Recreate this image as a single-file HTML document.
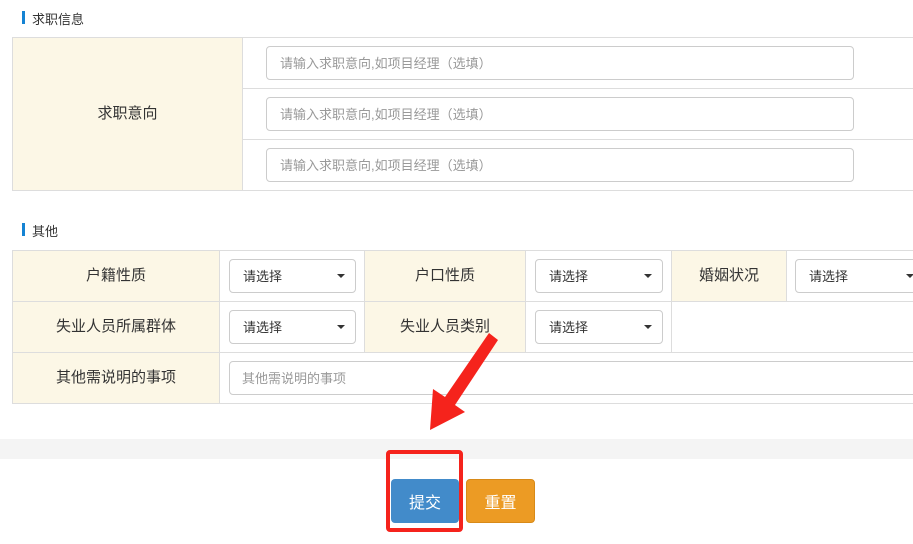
<!DOCTYPE html>
<html><head><meta charset="utf-8"><style>
*{box-sizing:border-box;margin:0;padding:0}
body{width:913px;height:544px;overflow:hidden;background:#fff;font-family:"Liberation Sans","Noto Sans CJK SC",sans-serif;position:relative;color:#333}
.a{position:absolute}
.h{font-size:13px;color:#333}
.h:before{content:"";position:absolute;left:-10px;top:2px;width:3px;height:13px;background:#1583d3}
.lab{background:#fcf7e6;border:1px solid #ddd;display:flex;align-items:center;justify-content:center;font-size:15px;color:#333;padding-bottom:3px}
.cell{border:1px solid #ddd;background:#fff}
.inp{border:1px solid #ccc;border-radius:4px;background:#fff;font-size:13px;color:#999;padding-left:13px;display:flex;align-items:center;padding-bottom:2px}
.sel{border:1px solid #ccc;border-radius:4px;background:#fff;font-size:13px;color:#333;padding-left:13px;display:flex;align-items:center;padding-bottom:2px}
.sel:after{content:"";position:absolute;right:10px;top:14px;border-left:4px solid transparent;border-right:4px solid transparent;border-top:4px solid #333}
</style></head><body>
<div class="a h" style="left:32px;top:9px">求职信息</div>
<div class="a lab" style="left:12px;top:37px;width:231px;height:154px">求职意向</div>
<div class="a cell" style="left:242px;top:37px;width:680px;height:52px"></div>
<div class="a cell" style="left:242px;top:88px;width:680px;height:52px"></div>
<div class="a cell" style="left:242px;top:139px;width:680px;height:52px"></div>
<div class="a inp" style="left:266px;top:46px;width:588px;height:34px">请输入求职意向,如项目经理（选填）</div>
<div class="a inp" style="left:266px;top:97px;width:588px;height:34px">请输入求职意向,如项目经理（选填）</div>
<div class="a inp" style="left:266px;top:148px;width:588px;height:34px">请输入求职意向,如项目经理（选填）</div>

<div class="a h" style="left:32px;top:221px">其他</div>
<div class="a lab" style="left:12px;top:250px;width:208px;height:52px">户籍性质</div>
<div class="a cell" style="left:219px;top:250px;width:146px;height:52px"></div>
<div class="a lab" style="left:364px;top:250px;width:162px;height:52px">户口性质</div>
<div class="a cell" style="left:525px;top:250px;width:147px;height:52px"></div>
<div class="a lab" style="left:671px;top:250px;width:116px;height:52px">婚姻状况</div>
<div class="a cell" style="left:786px;top:250px;width:140px;height:52px"></div>
<div class="a lab" style="left:12px;top:301px;width:208px;height:52px">失业人员所属群体</div>
<div class="a cell" style="left:219px;top:301px;width:146px;height:52px"></div>
<div class="a lab" style="left:364px;top:301px;width:162px;height:52px">失业人员类别</div>
<div class="a cell" style="left:525px;top:301px;width:147px;height:52px"></div>
<div class="a cell" style="left:671px;top:301px;width:255px;height:52px"></div>
<div class="a lab" style="left:12px;top:352px;width:208px;height:52px">其他需说明的事项</div>
<div class="a cell" style="left:219px;top:352px;width:707px;height:52px"></div>
<div class="a sel" style="left:229px;top:259px;width:127px;height:34px">请选择</div>
<div class="a sel" style="left:535px;top:259px;width:128px;height:34px">请选择</div>
<div class="a sel" style="left:795px;top:259px;width:130px;height:34px;">请选择</div>
<div class="a sel" style="left:229px;top:310px;width:127px;height:34px">请选择</div>
<div class="a sel" style="left:535px;top:310px;width:128px;height:34px">请选择</div>
<div class="a inp" style="left:229px;top:361px;width:700px;height:34px;padding-left:12px">其他需说明的事项</div>

<div class="a" style="left:0;top:439px;width:913px;height:20px;background:#f4f4f4"></div>
<div class="a" style="left:391px;top:479px;width:68px;height:44px;background:#428bca;border-radius:4px;color:#fff;font-size:16px;display:flex;align-items:center;justify-content:center">提交</div>
<div class="a" style="left:466px;top:479px;width:69px;height:44px;background:#ec9b24;border:1px solid #d88a18;border-radius:4px;color:#fff;font-size:16px;display:flex;align-items:center;justify-content:center">重置</div>
<div class="a" style="left:386px;top:450px;width:77px;height:82px;border:4px solid #f5231c;border-radius:4px"></div>
<svg class="a" style="left:0;top:0" width="913" height="544"><polygon points="498,340 489,333 445,397 433,389 430,430 465,412 455,405" fill="#f5231c"/></svg>
</body></html>
